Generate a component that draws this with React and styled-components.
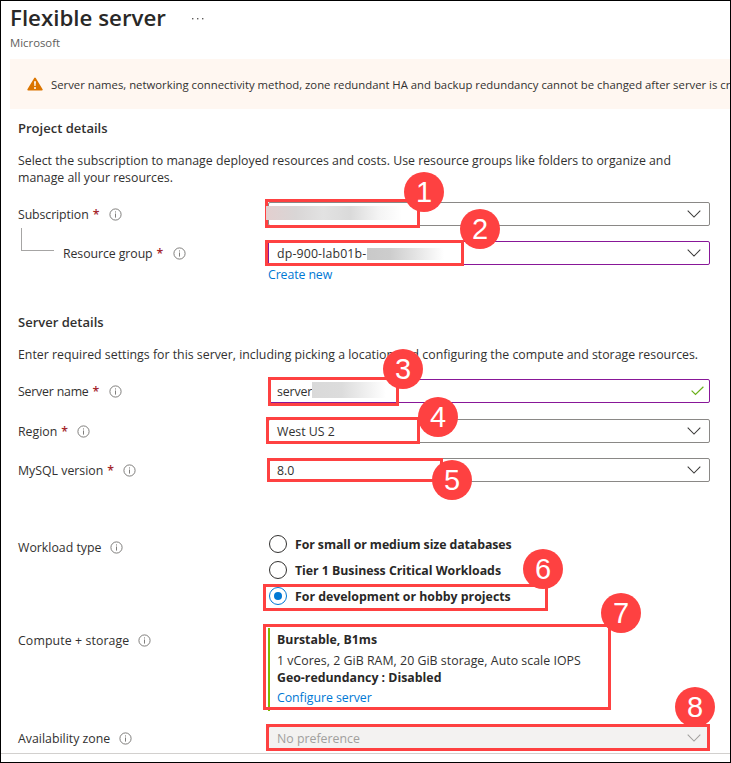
import React from 'react';
import styled, { createGlobalStyle } from 'styled-components';

const GlobalStyle = createGlobalStyle`
  * { box-sizing: border-box; }
  body { margin: 0; background: #fff; }
  svg { flex: none; }
`;

const RED = '#fe4141';

const Page = styled.main`
  position: relative;
  width: 731px;
  height: 763px;
  border: 1px solid #000;
  overflow: hidden;
  background: #fff;
  color: #323130;
  font: 12.33px/17px "Open Sans", "Noto Sans", sans-serif;
`;

const Header = styled.header`
  height: 58px;
  padding: 3px 0 0 9px;
`;

const TitleRow = styled.div`
  display: flex;
  align-items: center;
  gap: 26px;
  height: 28px;
`;

const Title = styled.h1`
  margin: 0;
  color: #292827;
  font-size: 22.3px;
  line-height: 28px;
  font-weight: 600;
`;

const Publisher = styled.div`
  margin-top: 2px;
  color: #605e5c;
  font-size: 11.35px;
  line-height: 17px;
`;

const Banner = styled.div`
  display: flex;
  align-items: center;
  gap: 8px;
  height: 50px;
  margin-left: 9px;
  padding-left: 17px;
  background: #fff7f1;
  font-size: 11.34px;
  white-space: nowrap;
`;

const Form = styled.section`
  padding-left: 17px;
`;

const Heading = styled.h2`
  margin: ${(p) => p.$top}px 0 0;
  color: #323130;
  font-size: 13.03px;
  line-height: 18px;
  font-weight: 600;
`;

const Description = styled.p`
  margin: ${(p) => p.$top}px 0 0;
  width: 690px;
  line-height: 17px;
`;

const Row = styled.div`
  display: grid;
  grid-template-columns: 250px 442px;
  align-items: ${(p) => (p.$start ? 'start' : 'center')};
  margin-top: ${(p) => p.$top || 0}px;
`;

const Label = styled.label`
  display: flex;
  align-items: center;
  height: ${(p) => p.$height || 24}px;
  padding-left: ${(p) => (p.$nested ? 3 : 0)}px;
  letter-spacing: ${(p) => p.$track || 0}px;
  white-space: nowrap;

  svg {
    margin-left: 9px;
  }
`;

const Branch = styled.span`
  align-self: flex-start;
  width: 33px;
  height: 23px;
  margin: -13px 9px 0 0;
  border-left: 1px solid #a6a5a4;
  border-bottom: 1px solid #a6a5a4;
`;

const Required = styled.span`
  width: 6px;
  margin: 0 1px 0 4px;
  color: #a4262c;
  font-weight: 600;
  letter-spacing: 0;
`;

const Field = styled.div`
  display: flex;
  align-items: center;
  justify-content: space-between;
  height: 24px;
  padding: 0 ${(p) => (p.$check ? 5 : 8)}px 0 8px;
  border: 1px solid ${(p) => (p.$edited ? '#881798' : '#8a8886')};
  border-radius: 2px;
  background: ${(p) => (p.$disabled ? '#f3f2f1' : '#fff')};
  color: ${(p) => (p.$disabled ? '#a19f9d' : '#323130')};
`;

const Value = styled.span`
  letter-spacing: ${(p) => p.$track || 0}px;
`;

const Link = styled.a`
  color: #0078d4;
  letter-spacing: ${(p) => p.$track || 0}px;
`;

const CreateNew = styled.div`
  height: 19px;
  margin-left: 250px;
  line-height: 19px;
`;

const Options = styled.div`
  display: grid;
  grid-auto-rows: 26px;
`;

const Option = styled.div`
  display: flex;
  align-items: center;
  gap: 8px;
  padding-left: 1px;
  color: #292827;
  font-weight: 700;
  letter-spacing: ${(p) => p.$track}px;
`;

const Radio = styled.span`
  display: grid;
  place-items: center;
  width: 18px;
  height: 18px;
  border: 1px solid ${(p) => (p.$on ? '#0078d4' : '#323130')};
  border-radius: 50%;

  &::after {
    content: '';
    width: 8px;
    height: 8px;
    border-radius: 50%;
    background: ${(p) => (p.$on ? '#0078d4' : 'transparent')};
  }
`;

const Summary = styled.div`
  height: 83px;
  padding: 3px 0 0 7px;
  border-left: 2px solid #7fba00;
`;

const SummaryTitle = styled.div`
  height: ${(p) => p.$height}px;
  color: #292827;
  font-weight: 700;
`;

const SummaryLine = styled.div`
  height: 17px;
  letter-spacing: 0.04px;
`;

const Footer = styled.footer`
  height: 9px;
  margin-top: 3px;
  border-top: 1px solid #d2d0ce;
`;

/* Markup drawn over the form: outlines, redactions and step numbers. */
const Outline = styled.div`
  position: absolute;
  left: ${(p) => p.$x - 1}px;
  top: ${(p) => p.$y - 1}px;
  width: ${(p) => p.$w}px;
  height: ${(p) => p.$h}px;
  border: 3px solid ${RED};
`;

const Redaction = styled.div`
  position: absolute;
  left: ${(p) => p.$x - 1}px;
  top: ${(p) => p.$y - 1}px;
  width: ${(p) => p.$w}px;
  height: ${(p) => p.$h}px;
  background: linear-gradient(90deg, ${(p) => p.$shades});
`;

const Step = styled.div`
  position: absolute;
  left: ${(p) => p.$x - 1}px;
  top: ${(p) => p.$y - 1}px;
  width: 40px;
  height: 40px;
  border-radius: 50%;
  background: ${RED};
  color: #fff;
  font: 29px/41px "Liberation Sans", Arial, sans-serif;
  text-align: center;
`;

const InfoIcon = () => (
  <svg width="13" height="13" viewBox="0 0 13 13" fill="none">
    <circle cx="6.5" cy="6.5" r="5.6" stroke="#72706e" strokeWidth="0.9" />
    <path d="M6.5 5.5V9.6M6.5 3.4V4.5" stroke="#72706e" strokeWidth="0.9" />
  </svg>
);

const Chevron = ({ color = '#3b3a39' }) => (
  <svg width="14" height="8" viewBox="0 0 14 8" fill="none">
    <path d="M0.7 0.7L7 7L13.3 0.7" stroke={color} strokeWidth="1.05" />
  </svg>
);

const Check = () => (
  <svg width="13" height="10" viewBox="0 0 13 10" fill="none">
    <path d="M0.6 4.6L4.5 8.5L12.4 0.7" stroke="#6bb01b" strokeWidth="1.2" />
  </svg>
);

const Warning = () => (
  <svg width="16" height="15" viewBox="0 0 16 15">
    <path d="M8 1.4L14.8 12.6H1.2Z" fill="#db7500" stroke="#db7500" strokeWidth="1.8" strokeLinejoin="round" />
    <path d="M7.1 4.2H8.9L8.6 9H7.4Z" fill="#fff" />
    <circle cx="8" cy="11" r="1" fill="#fff" />
  </svg>
);

const Dots = () => (
  <svg width="12" height="3" viewBox="0 0 12 3" fill="#605e5c">
    <rect x="0" y="1" width="1.4" height="1.4" />
    <rect x="5" y="1" width="1.4" height="1.4" />
    <rect x="10" y="1" width="1.4" height="1.4" />
  </svg>
);

function FieldLabel({ text, required, nested, track, height }) {
  return (
    <Label $nested={nested} $track={track} $height={height}>
      {nested && <Branch />}
      {text}
      {required && <Required>*</Required>}
      <InfoIcon />
    </Label>
  );
}

function SelectRow({ top, label, nested, track, value, valueTrack, edited, disabled, required = true }) {
  return (
    <Row $top={top}>
      <FieldLabel text={label} required={required} nested={nested} track={track} />
      <Field $edited={edited} $disabled={disabled}>
        <Value $track={valueTrack}>{value}</Value>
        <Chevron color={disabled ? '#a19f9d' : undefined} />
      </Field>
    </Row>
  );
}

const WORKLOADS = [
  { name: 'For small or medium size databases', track: -0.09 },
  { name: 'Tier 1 Business Critical Workloads', track: -0.03 },
  { name: 'For development or hobby projects', track: 0, on: true },
];

const OUTLINES = [
  [265, 199, 155, 29],
  [265, 240, 199, 26],
  [268, 377, 131, 29],
  [266, 417, 154, 27],
  [267, 458, 176, 24],
  [263, 584, 285, 27],
  [263, 624, 348, 86],
  [266, 724, 444, 27],
];

const REDACTIONS = [
  [266, 206, 136, 14, '#e3cfcf 0%, #d9d6d6 22%, #e2e2e2 42%, #dadada 62%, #f4f4f4 83%, #fff 100%'],
  [367, 248, 77, 12, '#c9c9c9 0%, #cdcdcd 30%, #e0e0e0 58%, #fff 100%'],
  [312, 382, 74, 16, '#d9d9d9 0%, #dcdcdc 40%, #fff 100%'],
];

const STEPS = [
  [404, 172],
  [460, 209],
  [383, 349],
  [418, 397],
  [432, 460],
  [523, 549],
  [601, 593],
  [675, 687],
];

export default function App() {
  return (
    <Page>
      <GlobalStyle />
      <Header>
        <TitleRow>
          <Title>Flexible server</Title>
          <Dots />
        </TitleRow>
        <Publisher>Microsoft</Publisher>
      </Header>
      <Banner>
        <Warning />
        Server names, networking connectivity method, zone redundant HA and backup redundancy cannot be changed after
        server is created.
      </Banner>

      <Form>
        <Heading $top={10}>Project details</Heading>
        <Description $top={15}>
          Select the subscription to manage deployed resources and costs. Use resource groups like folders to organize
          and
          <br />
          manage all your resources.
        </Description>
        <SelectRow top={16} label="Subscription" track={-0.1} value="" />
        <SelectRow top={15} label="Resource group" nested track={-0.08} value="dp-900-lab01b-" valueTrack={0.15} edited />
        <CreateNew>
          <Link $track={-0.1}>Create new</Link>
        </CreateNew>

        <Heading $top={29}>Server details</Heading>
        <Description $top={15}>
          Enter required settings for this server, including picking a location and configuring the compute and
          storage resources.
        </Description>
        <Row $top={16}>
          <FieldLabel text="Server name" required track={-0.2} />
          <Field $edited $check>
            <Value $track={-0.15}>server</Value>
            <Check />
          </Field>
        </Row>
        <SelectRow top={16} label="Region" value="West US 2" />
        <SelectRow top={15} label="MySQL version" value="8.0" />

        <Row $top={49} $start>
          <FieldLabel text="Workload type" height={33} />
          <Options>
            {WORKLOADS.map(({ name, track, on }) => (
              <Option key={name} $track={track}>
                <Radio $on={on} />
                {name}
              </Option>
            ))}
          </Options>
        </Row>

        <Row $top={19} $start>
          <FieldLabel text="Compute + storage" track={0.1} />
          <Summary>
            <SummaryTitle $height={21}>Burstable, B1ms</SummaryTitle>
            <SummaryLine>1 vCores, 2 GiB RAM, 20 GiB storage, Auto scale IOPS</SummaryLine>
            <SummaryTitle $height={20}>Geo-redundancy : Disabled</SummaryTitle>
            <Link $track={-0.04}>Configure server</Link>
          </Summary>
        </Row>

        <SelectRow top={15} label="Availability zone" required={false} value="No preference" disabled />
      </Form>
      <Footer />

      {OUTLINES.map(([x, y, w, h]) => (
        <Outline key={y} $x={x} $y={y} $w={w} $h={h} />
      ))}
      {REDACTIONS.map(([x, y, w, h, shades]) => (
        <Redaction key={y} $x={x} $y={y} $w={w} $h={h} $shades={shades} />
      ))}
      {STEPS.map(([x, y], i) => (
        <Step key={y} $x={x} $y={y}>
          {i + 1}
        </Step>
      ))}
    </Page>
  );
}
